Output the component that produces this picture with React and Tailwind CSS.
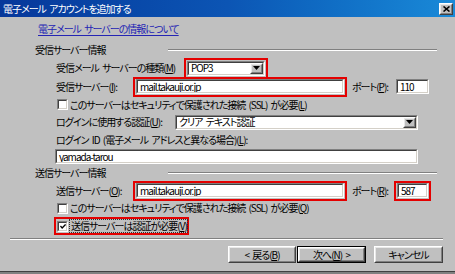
import React from "react";

const TXT = "text-[10px] leading-none tracking-[-1px] [word-spacing:2px] [font-feature-settings:'palt'] text-black whitespace-nowrap";

function U({ children }) {
  return <span className="underline underline-offset-[1px]">{children}</span>;
}

function Sunken({ className = "", children }) {
  return (
    <div className={`box-border border border-t-[#808080] border-l-[#808080] border-r-white border-b-white ${className}`}>
      <div className="box-border h-full w-full border border-t-[#404040] border-l-[#404040] border-r-[#d4d0c8] border-b-[#d4d0c8] bg-white flex items-center pl-[2px] overflow-hidden">
        {children}
      </div>
    </div>
  );
}

function Raised({ className = "", children }) {
  return (
    <div className={`box-border border border-t-white border-l-white border-r-[#404040] border-b-[#404040] ${className}`}>
      <div className="box-border h-full w-full border border-t-[#e8e8e8] border-l-[#e8e8e8] border-r-[#808080] border-b-[#808080] bg-[#c0c0c0] flex items-center justify-center">
        {children}
      </div>
    </div>
  );
}

function DropBtn() {
  return (
    <Raised className="w-[13px] h-full shrink-0">
      <svg width="7" height="4" viewBox="0 0 7 4">
        <polygon points="0,0 7,0 3.5,4" fill="#000" />
      </svg>
    </Raised>
  );
}

function Select({ className = "", children }) {
  return (
    <div className={`box-border border border-t-[#808080] border-l-[#808080] border-r-white border-b-white ${className}`}>
      <div className="box-border h-full w-full border border-t-[#404040] border-l-[#404040] border-r-[#d4d0c8] border-b-[#d4d0c8] bg-white flex items-center">
        <span className={`${TXT} flex-1 pl-[2px]`}>{children}</span>
        <DropBtn />
      </div>
    </div>
  );
}

function Check({ checked }) {
  return (
    <Sunken className="w-[11px] h-[11px] shrink-0">
      {checked ? (
        <svg width="7" height="7" viewBox="0 0 7 7" className="-ml-[1px]">
          <polyline points="0.5,3 2.5,5.2 6.5,1" fill="none" stroke="#000" strokeWidth="1.6" />
        </svg>
      ) : null}
    </Sunken>
  );
}

function Sep({ className = "" }) {
  return <div className={`h-[2px] border-t border-t-[#808080] border-b border-b-white ${className}`} />;
}

function Red({ className = "", children }) {
  return <div className={`box-border border-2 border-[#e40000] p-px flex items-center ${className}`}>{children}</div>;
}

function Button({ className = "", isDefault, children }) {
  const btn = (
    <Raised className={isDefault ? "w-full h-full" : `w-[68px] h-[17px] ${className}`}>
      <span className={TXT}>{children}</span>
    </Raised>
  );
  if (isDefault) {
    return <div className={`box-border border border-black ${className}`}>{btn}</div>;
  }
  return btn;
}

export default function App() {
  return (
    <div className="w-[455px] h-[274px] bg-[#c0c0c0] flex flex-col overflow-hidden font-['Noto_Sans_CJK_JP',sans-serif]">
      {/* title bar */}
      <div className="h-[17px] shrink-0 bg-gradient-to-r from-[#07379a] via-[#0c55b4] to-[#1a8ad8] flex items-center pl-[3px] pr-[2px]">
        <span className="text-[10px] leading-none tracking-[-1px] [word-spacing:2px] [font-feature-settings:'palt'] text-white flex-1 whitespace-nowrap">電子メール アカウントを追加する</span>
        <Raised className="w-[14px] h-[12px]">
          <svg width="7" height="6" viewBox="0 0 7 6">
            <path d="M0.5 0.5 L6.5 5.5 M6.5 0.5 L0.5 5.5" stroke="#000" strokeWidth="1.6" />
          </svg>
        </Raised>
      </div>

      {/* link */}
      <div className="h-[23px] shrink-0 flex items-center pl-[38px]">
        <span className={`${TXT} !text-[#2424b4] underline underline-offset-[2px]`}>電子メール サーバーの情報について</span>
      </div>

      {/* header 1 */}
      <div className="h-[19px] shrink-0 flex items-center pl-[35px]">
        <span className={`${TXT} w-[133px]`}>受信サーバー情報</span>
        <Sep className="w-[269px]" />
      </div>

      {/* server type */}
      <div className="h-[18px] shrink-0 flex items-center pl-[56px]">
        <span className={`${TXT} w-[128px] shrink-0 tracking-[-1.1px]`}>受信メール サーバーの種類(<U>M</U>)</span>
        <Red className="w-[84px] h-[21px] shrink-0">
          <Select className="w-full h-[15px]">POP3</Select>
        </Red>
      </div>

      {/* incoming server */}
      <div className="h-[19px] shrink-0 flex items-center pl-[56px]">
        <span className={`${TXT} w-[77px] shrink-0`}>受信サーバー(<U>I</U>):</span>
        <Red className="w-[214px] h-[20px] shrink-0">
          <Sunken className="w-full h-[15px]">
            <span className={TXT + " tracking-[-0.4px]"}>mail.takauji.or.jp</span>
          </Sunken>
        </Red>
        <span className={`${TXT} w-[44px] shrink-0 ml-[5px]`}>ポート(<U>P</U>):</span>
        <Sunken className="w-[33px] h-[15px] shrink-0">
          <span className={TXT + " tracking-[-0.3px]"}>110</span>
        </Sunken>
      </div>

      {/* ssl 1 */}
      <div className="h-[17px] shrink-0 flex items-center pl-[57px] gap-[2px]">
        <Check />
        <span className={TXT}>このサーバーはセキュリティで保護された接続 (SSL) が必要(<U>L</U>)</span>
      </div>

      {/* auth */}
      <div className="h-[18px] shrink-0 flex items-center pl-[56px]">
        <span className={`${TXT} w-[119px] shrink-0`}>ログインに使用する認証(<U>U</U>):</span>
        <Select className="w-[243px] h-[15px] shrink-0">クリア テキスト認証</Select>
      </div>

      {/* login id label */}
      <div className="h-[18px] shrink-0 flex items-center pl-[56px]">
        <span className={TXT}>ログイン ID (電子メール アドレスと異なる場合)(<U>L</U>):</span>
      </div>

      {/* login id input */}
      <div className="h-[15px] shrink-0 flex items-center pl-[55px]">
        <Sunken className="w-[363px] h-[15px]">
          <span className={TXT + " tracking-[-0.4px]"}>yamada-tarou</span>
        </Sunken>
      </div>

      {/* header 2 */}
      <div className="h-[18px] shrink-0 flex items-center pl-[35px]">
        <span className={`${TXT} w-[133px]`}>送信サーバー情報</span>
        <Sep className="w-[269px]" />
      </div>

      {/* outgoing server */}
      <div className="h-[17px] shrink-0 flex items-center pl-[56px]">
        <span className={`${TXT} w-[77px] shrink-0`}>送信サーバー(<U>O</U>):</span>
        <Red className="w-[214px] h-[20px] shrink-0">
          <Sunken className="w-full h-[15px]">
            <span className={TXT + " tracking-[-0.4px]"}>mail.takauji.or.jp</span>
          </Sunken>
        </Red>
        <span className={`${TXT} w-[42px] shrink-0 ml-[5px]`}>ポート(<U>R</U>):</span>
        <Red className="w-[37px] h-[20px] shrink-0">
          <Sunken className="w-full h-[15px]">
            <span className={TXT + " tracking-[-0.3px]"}>587</span>
          </Sunken>
        </Red>
      </div>

      {/* ssl 2 */}
      <div className="h-[18px] shrink-0 flex items-center pl-[57px] gap-[2px]">
        <Check />
        <span className={TXT}>このサーバーはセキュリティで保護された接続 (SSL) が必要(<U>Q</U>)</span>
      </div>

      {/* auth required */}
      <div className="h-[18px] shrink-0 flex items-center pl-[54px]">
        <Red className="w-[135px] h-[18px] gap-[1px] shrink-0">
          <Check checked />
          <span className={`${TXT} tracking-[-1.3px] border border-dotted border-[#303030] pl-px pr-0 py-px`}>送信サーバーは認証が必要(<U>V</U>)</span>
        </Red>
      </div>

      {/* bottom separator */}
      <div className="h-[8px] shrink-0 flex items-center pl-[10px]">
        <Sep className="w-[433px]" />
      </div>

      {/* buttons */}
      <div className="h-[23px] shrink-0 flex items-start pt-[3px] pl-[228px]">
        <Button>&lt; 戻る(<U>B</U>)</Button>
        <Button isDefault className="w-[69px] h-[17px] ml-px">次へ(<U>N</U>) &gt;</Button>
        <Button className="ml-[8px] !w-[69px]">キャンセル</Button>
      </div>

      <div className="flex-1" />
      <div className="h-px shrink-0 bg-[#404040]" />
      <div className="h-[2px] shrink-0 bg-[#808080]" />
    </div>
  );
}
